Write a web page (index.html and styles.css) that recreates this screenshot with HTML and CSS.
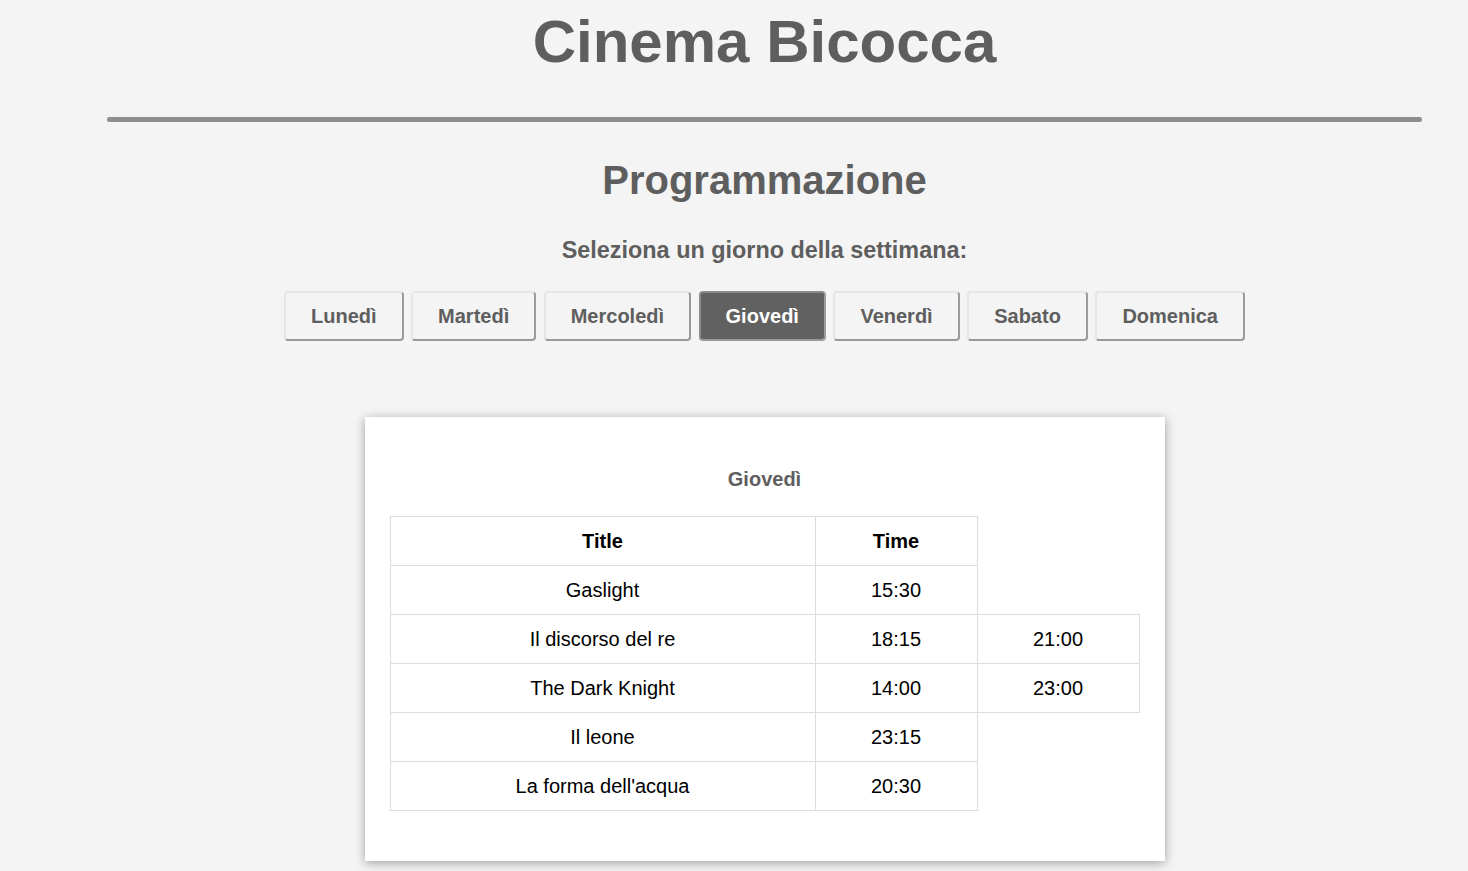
FILE: index.html
```html
<!DOCTYPE html>
<html lang="it">
<head>
<meta charset="utf-8">
<title>Cinema Bicocca</title>
<link rel="stylesheet" href="styles.css">
</head>
<body>
<div class="page">
  <h1 class="site-title">Cinema Bicocca</h1>
  <hr class="divider">
  <h2 class="section-title">Programmazione</h2>
  <p class="prompt">Seleziona un giorno della settimana:</p>
  <div class="days">
    <button class="day">Lunedì</button>
    <button class="day">Martedì</button>
    <button class="day">Mercoledì</button>
    <button class="day active">Giovedì</button>
    <button class="day">Venerdì</button>
    <button class="day">Sabato</button>
    <button class="day">Domenica</button>
  </div>
  <div class="card">
    <h3 class="card-title">Giovedì</h3>
    <table class="schedule">
      <colgroup>
        <col class="col-title">
        <col class="col-time">
        <col class="col-time">
      </colgroup>
      <tr><th>Title</th><th>Time</th></tr>
      <tr><td>Gaslight</td><td>15:30</td></tr>
      <tr><td>Il discorso del re</td><td>18:15</td><td>21:00</td></tr>
      <tr><td>The Dark Knight</td><td>14:00</td><td>23:00</td></tr>
      <tr><td>Il leone</td><td>23:15</td></tr>
      <tr><td>La forma dell'acqua</td><td>20:30</td></tr>
    </table>
  </div>
</div>
</body>
</html>
```

FILE: styles.css
```css
html, body {
  margin: 0;
  padding: 0;
  background: #f4f4f4;
  font-family: "Liberation Sans", Arial, sans-serif;
  color: #5e5e5e;
}

.page {
  padding-left: 61px;
  display: flex;
  flex-direction: column;
  align-items: center;
  padding-bottom: 40px;
}

.site-title {
  font-size: 60px;
  line-height: 70px;
  font-weight: bold;
  margin: 0;
  padding-top: 7px;
  color: #5e5e5e;
}

.divider {
  align-self: stretch;
  height: 5px;
  border: 0;
  border-radius: 2px;
  background: #8e8e8e;
  margin: 40px 46px 0 46px;
}

.section-title {
  font-size: 40px;
  line-height: 46px;
  font-weight: bold;
  margin: 35px 0 0 0;
  color: #5e5e5e;
}

.prompt {
  font-size: 23.4px;
  line-height: 27px;
  font-weight: bold;
  margin: 34px 0 0 0;
  color: #5e5e5e;
}

.days {
  display: flex;
  gap: 7.5px;
  margin-top: 27px;
}

.day {
  height: 50px;
  box-sizing: border-box;
  padding: 0 25px;
  font-family: "Liberation Sans", Arial, sans-serif;
  font-size: 20px;
  font-weight: bold;
  color: #5e5e5e;
  background: #f4f4f4;
  border: 2px solid #e6e6e6;
  border-right-color: #9a9a9a;
  border-bottom-color: #9a9a9a;
  border-radius: 4px;
}

.day.active {
  background: #616161;
  color: #ffffff;
  border-color: #8a8a8a;
  border-right-color: #9a9a9a;
  border-bottom-color: #9a9a9a;
}

.card {
  width: 800px;
  box-sizing: border-box;
  margin-top: 76px;
  padding: 25px;
  background: #ffffff;
  box-shadow: 0 2px 10px rgba(0, 0, 0, 0.35);
}

.card-title {
  font-size: 20px;
  line-height: 23px;
  font-weight: bold;
  text-align: center;
  margin: 26px 0 25px 0;
  color: #5e5e5e;
}

.schedule {
  border-collapse: collapse;
  table-layout: fixed;
  width: 750px;
  margin-bottom: 25px;
  color: #000000;
  font-size: 20px;
}

.col-title {
  width: 425px;
}

.col-time {
  width: 162px;
}

.schedule th,
.schedule td {
  border: 1px solid #dddddd;
  padding: 12px 0;
  line-height: 24px;
  text-align: center;
}

.schedule th {
  font-weight: bold;
}
```
